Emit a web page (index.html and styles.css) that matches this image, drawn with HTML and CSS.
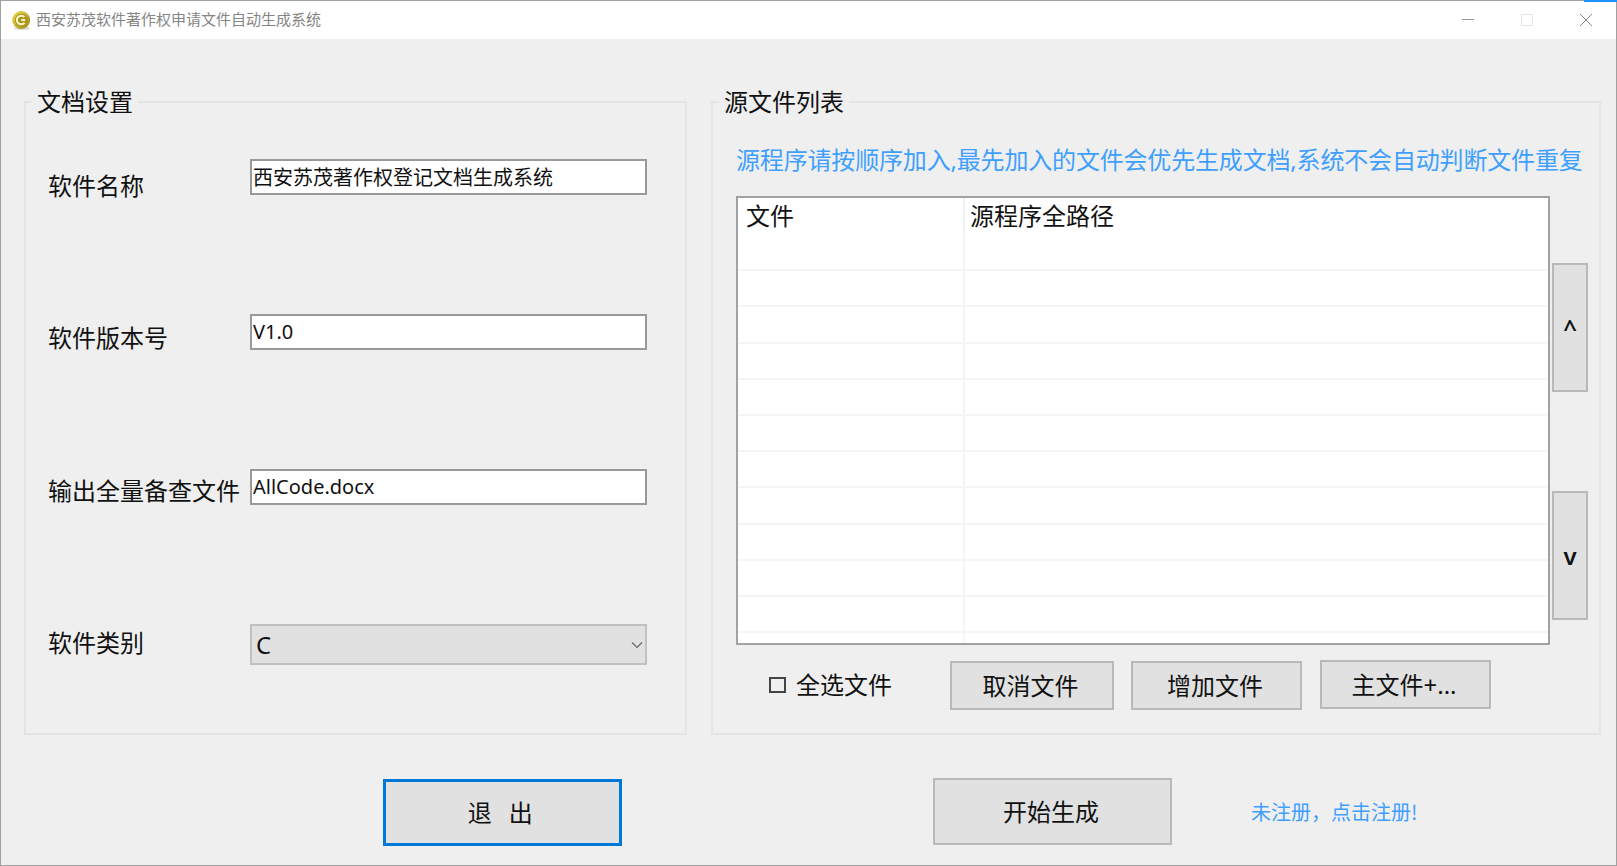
FILE: index.html
```html
<!DOCTYPE html>
<html lang="zh-CN">
<head>
  <meta charset="UTF-8">
  <title>西安苏茂软件著作权申请文件自动生成系统</title>
  <link rel="stylesheet" href="styles.css">
</head>
<body>
  <div class="window">
    <div class="titlebar">
      <svg class="app-icon" width="19" height="19" viewBox="0 0 19 19">
        <defs>
          <linearGradient id="coin" x1="0" y1="0" x2="1" y2="1">
            <stop offset="0" stop-color="#f0e050"/>
            <stop offset="1" stop-color="#978314"/>
          </linearGradient>
        </defs>
        <ellipse cx="10" cy="17.4" rx="8" ry="1.6" fill="#d8d8d0"/>
        <circle cx="9.2" cy="9" r="9" fill="url(#coin)"/>
        <circle cx="9.2" cy="9" r="6.2" fill="#a8951c"/>
        <path d="M12.4 6.2A4.3 4.3 0 1 0 12.6 11.6M9.2 9H13.2" fill="none" stroke="#faf6c8" stroke-width="2"/>
      </svg>
      <span class="app-title">西安苏茂软件著作权申请文件自动生成系统</span>
      <div class="win-controls">
        <svg width="12" height="12" viewBox="0 0 12 12"><path d="M0 5.5H12" stroke="#999" stroke-width="1"/></svg>
        <svg width="12" height="12" viewBox="0 0 12 12"><path d="M.5 .5H11.5V11.5H.5Z" fill="none" stroke="#e3e3e3" stroke-width="1"/></svg>
        <svg width="12" height="12" viewBox="0 0 12 12"><path d="M0 0L12 12M12 0L0 12" stroke="#8a8a8a" stroke-width="1"/></svg>
      </div>
      <div class="behind-edge"></div>
    </div>

    <div class="content">
      <div class="groups">
        <fieldset class="group group-settings">
          <legend>文档设置</legend>
          <div class="settings">
            <label class="field-label label-name">软件名称</label>
            <input class="text-input" type="text" value="西安苏茂著作权登记文档生成系统">
            <label class="field-label label-version">软件版本号</label>
            <input class="text-input" type="text" value="V1.0">
            <label class="field-label label-output">输出全量备查文件</label>
            <input class="text-input" type="text" value="AllCode.docx">
            <label class="field-label label-type">软件类别</label>
            <div class="select-box">
              <span>C</span>
              <svg width="12" height="8" viewBox="0 0 12 8"><path d="M1 1.5L6 6.5L11 1.5" fill="none" stroke="#666" stroke-width="1.2"/></svg>
            </div>
          </div>
        </fieldset>

        <fieldset class="group group-files">
          <legend>源文件列表</legend>
          <div class="files-body">
            <p class="note">源程序请按顺序加入,最先加入的文件会优先生成文档,系统不会自动判断文件重复</p>
            <div class="list-row">
              <div class="file-list">
                <table>
                  <thead>
                    <tr><th class="col-file">文件</th><th class="col-path">源程序全路径</th></tr>
                  </thead>
                  <tbody>
                    <tr><td></td><td></td></tr>
                    <tr><td></td><td></td></tr>
                    <tr><td></td><td></td></tr>
                    <tr><td></td><td></td></tr>
                    <tr><td></td><td></td></tr>
                    <tr><td></td><td></td></tr>
                    <tr><td></td><td></td></tr>
                    <tr><td></td><td></td></tr>
                    <tr><td></td><td></td></tr>
                    <tr><td></td><td></td></tr>
                    <tr><td></td><td></td></tr>
                    <tr><td></td><td></td></tr>
                  </tbody>
                </table>
              </div>
              <div class="order-buttons">
                <button class="btn btn-order">^</button>
                <button class="btn btn-order">v</button>
              </div>
            </div>
            <div class="file-actions">
              <label class="check-all"><span class="check-box"></span><span class="check-text">全选文件</span></label>
              <button class="btn btn-cancel">取消文件</button>
              <button class="btn btn-add">增加文件</button>
              <button class="btn btn-main">主文件+...</button>
            </div>
          </div>
        </fieldset>
      </div>

      <div class="footer-row">
        <button class="btn btn-large btn-focus">退&nbsp;&nbsp;出</button>
        <button class="btn btn-large btn-start">开始生成</button>
        <a class="register-link">未注册&#65292;点击注册!</a>
      </div>
    </div>
  </div>
</body>
</html>
```

FILE: styles.css
```css
* {
  box-sizing: border-box;
}
html, body {
  margin: 0;
  height: 100%;
  overflow: hidden;
}
body {
  font-family: "Noto Sans", "Noto Sans CJK SC", sans-serif;
  color: #111;
  background: #efefef;
}
.window {
  height: 866px;
  border: 1px solid #a0a0a0;
  background: #efefef;
}

/* title bar */
.titlebar {
  position: relative;
  display: flex;
  align-items: center;
  height: 38px;
  padding-left: 11px;
  background: #fff;
}
.app-icon {
  flex: none;
  margin: 0 5px 0 0;
}
.app-title {
  margin-bottom: 3px;
  font-size: 15px;
  color: #858585;
  font-family: "Noto Sans CJK SC", sans-serif;
}
.win-controls {
  display: flex;
  gap: 47px;
  margin-left: auto;
  margin-right: 24px;
}
.behind-edge {
  position: absolute;
  top: -1px;
  right: -1px;
  width: 33px;
  height: 2px;
  background: #1e90ff;
}

.content {
  padding: 47px 15px 0 23px;
}
.groups {
  display: flex;
  gap: 24px;
}

/* group boxes */
.group {
  margin: 0;
  padding: 0;
  height: 649px;
  min-width: 0;
  border: 2px solid #e4e4e4;
}
.group legend {
  margin-left: 6px;
  padding: 0 5px;
  font-size: 24px;
  line-height: 32px;
}
.group-settings {
  width: 663px;
}
.group-files {
  width: 890px;
}
.files-body {
  padding-left: 23px;
}

/* left side */
.settings {
  display: grid;
  grid-template-columns: 202px 397px;
  grid-auto-rows: 155px;
  padding: 41px 0 0 22px;
}
.field-label {
  font-size: 24px;
  line-height: 32px;
  white-space: nowrap;
}
.label-name { padding-top: 11px; }
.label-version { padding-top: 8px; }
.label-output { padding-top: 6px; }
.label-type { padding-top: 3px; }
.text-input {
  width: 397px;
  height: 36px;
  padding: 0 1px 2px;
  border: 2px solid #999;
  border-radius: 0;
  background: #fff;
  color: #111;
  font: 20px "Noto Sans", "Noto Sans CJK SC", sans-serif;
  outline: none;
}
.select-box {
  display: flex;
  align-items: center;
  justify-content: space-between;
  width: 397px;
  height: 41px;
  padding: 0 2px 0 4px;
  border: 2px solid #c0c0c0;
  background: #e1e1e1;
  font-size: 24px;
}

/* right side */
.note {
  margin: 24px 0 18px;
  font-size: 24px;
  line-height: 36px;
  letter-spacing: -0.17px;
  color: #3f9fff;
  white-space: nowrap;
}
.list-row {
  display: flex;
  gap: 2px;
}
.file-list {
  width: 814px;
  height: 449px;
  overflow: hidden;
  border: 2px solid #a0a2a6;
  background: #fff;
}
.file-list table {
  width: 100%;
  border-collapse: collapse;
  table-layout: fixed;
}
.file-list th {
  height: 36px;
  padding: 0 0 0 8px;
  font-size: 24px;
  font-weight: normal;
  text-align: left;
  line-height: 36px;
  border-left: 2px solid #f0f0f0;
}
.file-list th:first-child {
  border-left: 0;
}
.file-list .col-file {
  width: 226px;
}
.file-list .col-path {
  padding-left: 5px;
}
.file-list td {
  height: 36.2px;
  padding: 0;
  border-bottom: 2px solid #f5f5f5;
  border-left: 2px solid #f5f5f5;
}
.file-list td:first-child {
  border-left: 0;
}
.order-buttons {
  display: flex;
  flex-direction: column;
  gap: 99px;
  padding-top: 67px;
}

/* buttons */
.btn {
  margin: 0;
  padding: 0 3px 2px 0;
  border: 2px solid #b9b9b9;
  border-radius: 0;
  background: #e1e1e1;
  color: #111;
  font: 24px "Noto Sans", "Noto Sans CJK SC", sans-serif;
}
.btn-order {
  width: 36px;
  height: 129px;
  padding: 0;
  font-weight: 600;
}
.file-actions {
  display: flex;
  align-items: flex-start;
  margin-top: 15px;
}
.check-all {
  display: flex;
  align-items: center;
  width: 181px;
  height: 49px;
  margin-left: 33px;
  font-size: 24px;
}
.check-box {
  width: 17px;
  height: 16px;
  margin-right: 10px;
  border: 2px solid #444;
}
.check-text {
  margin-bottom: 2px;
}
.btn-cancel {
  width: 164px;
  height: 49px;
  margin-top: 1px;
}
.btn-add {
  width: 171px;
  height: 49px;
  margin: 1px 0 0 17px;
}
.btn-main {
  width: 171px;
  height: 49px;
  margin-left: 18px;
}

/* footer */
.footer-row {
  display: flex;
  align-items: flex-start;
  margin-top: 43px;
  padding-left: 359px;
}
.btn-large {
  width: 239px;
  height: 67px;
}
.btn-focus {
  margin-top: 1px;
  border: 3px solid #0078d7;
  letter-spacing: 1.5px;
}
.btn-start {
  margin-left: 311px;
}
.register-link {
  margin: 19px 0 0 79px;
  font-size: 20px;
  color: #3f9fff;
  font-family: "Noto Sans CJK SC", sans-serif;
}
```
